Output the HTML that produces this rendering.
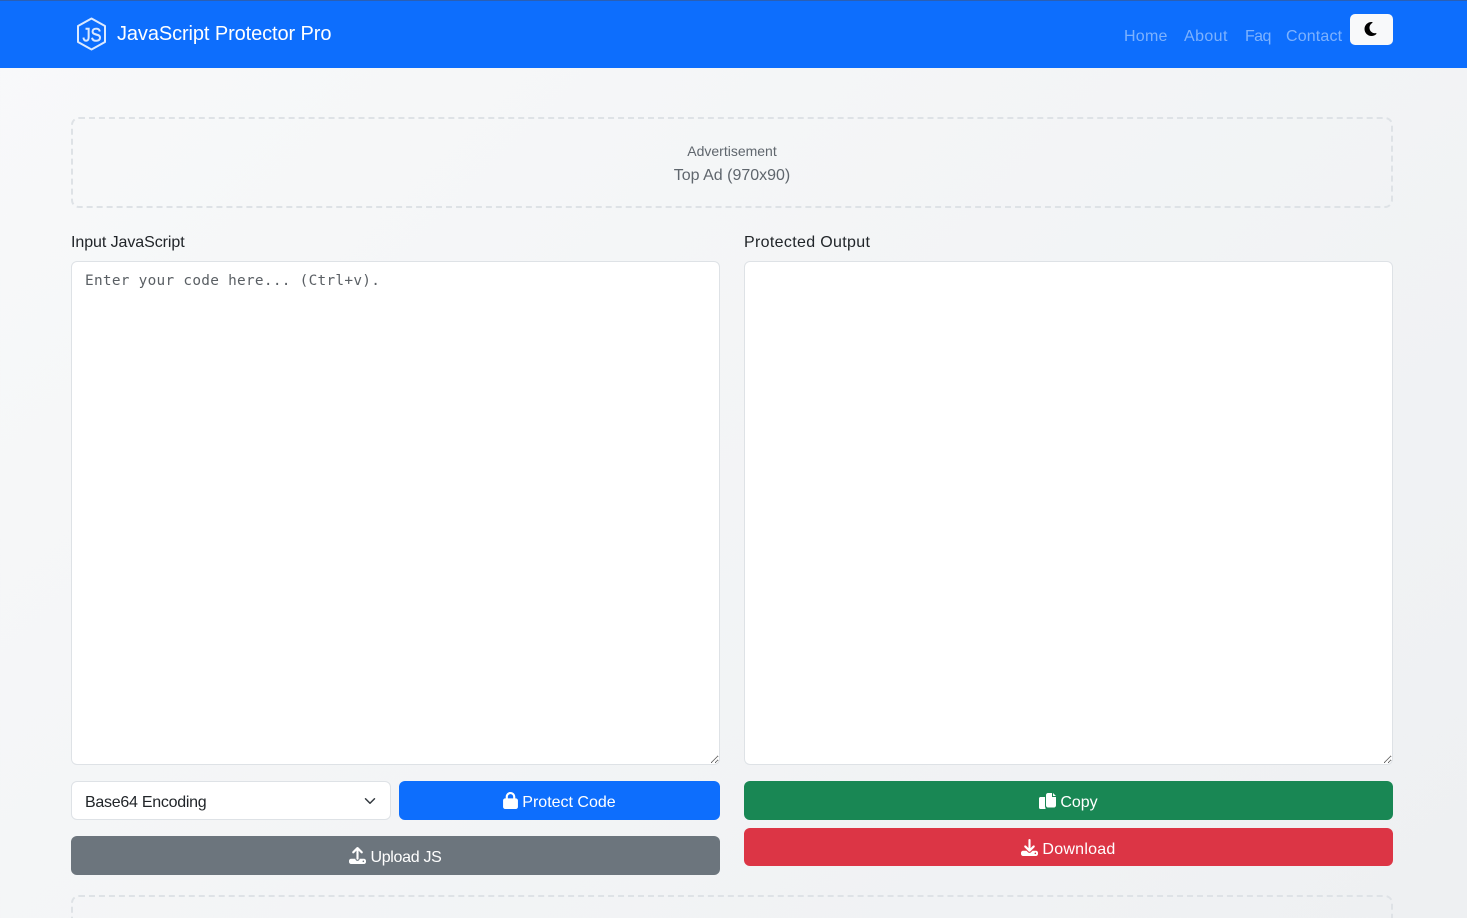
<!DOCTYPE html>
<html lang="en">
<head>
<meta charset="utf-8">
<title>JavaScript Protector Pro</title>
<style>
*{box-sizing:border-box}
html,body{margin:0;padding:0;width:1467px;height:918px;overflow:hidden}
body{position:relative;font-family:"Liberation Sans",sans-serif;font-size:16px;color:#212529;background:linear-gradient(135deg,#f8f9fa 0%,#eef0f2 100%)}
.abs{position:absolute;white-space:nowrap}
nav{position:absolute;left:0;top:0;width:1467px;height:68px;background:#0d6efd;border-top:1px solid #2a5fb4}
.brand{left:117px;top:22px;line-height:24px;font-size:20px;color:#fff;letter-spacing:-.1px}
.link{top:26px;line-height:22px;font-size:16px;color:#7db2fe}
.toggle{left:1350px;top:14px;width:43px;height:31px;background:#f8f9fa;border-radius:5px;border:0;padding:0}
.ad{left:71px;width:1322px;border:2px dashed #dee2e6;border-radius:8px}
.center{text-align:center}
label{position:absolute;font-size:16px;line-height:20px;top:233px;color:#212529}
textarea{position:absolute;top:261px;width:649px;height:504px;border:1px solid #dee2e6;border-radius:6px;background:#fff;padding:9px 13px;margin:0;font-family:"DejaVu Sans Mono","Liberation Mono",monospace;font-size:14.4px;letter-spacing:.28px;line-height:20px;color:#212529;outline:none;resize:vertical}
textarea::placeholder{color:#5a5f64;opacity:1}
.select{position:absolute;left:71px;top:781px;width:320px;height:39px;background:#fff;border:1px solid #dee2e6;border-radius:6px;padding-left:13px;line-height:41px;font-size:16px;letter-spacing:-.27px;color:#212529}
.btn{position:absolute;display:flex;align-items:center;justify-content:center;color:#fff;border:0;border-radius:6px;font-family:inherit;font-size:16px;padding:0}
.btn svg{fill:#fff;display:block;margin-right:4px}
.btn span{position:relative;top:2px}
</style>
</head>
<body>
<nav></nav>
<svg class="abs" style="left:74px;top:16px" width="36" height="36" viewBox="0 0 36 36">
<path d="M17.5 2.500 L31 10 V26 L17.500 33.500 L4 26 V10 Z" fill="none" stroke="#dbe9ff" stroke-width="2" stroke-linejoin="round"/>
<text x="8.500" y="25.500" font-family="Liberation Sans, sans-serif" font-size="19" fill="#dbe9ff" stroke="#dbe9ff" stroke-width=".5" textLength="19" lengthAdjust="spacingAndGlyphs">JS</text>
</svg>
<div class="abs brand">JavaScript Protector Pro</div>
<div class="abs link" style="left:1124px;letter-spacing:.25px">Home</div>
<div class="abs link" style="left:1184px;letter-spacing:.4px">About</div>
<div class="abs link" style="left:1245px;letter-spacing:-.6px">Faq</div>
<div class="abs link" style="left:1286px;letter-spacing:.15px">Contact</div>
<button class="abs toggle" aria-label="Toggle theme">
<svg style="position:absolute;left:14px;top:7px" width="13" height="16" viewBox="0 0 384 512"><path fill="#000" d="M223.5 32C100 32 0 132.3 0 256S100 480 223.5 480c60.6 0 115.5-24.2 155.8-63.4c5-4.9 6.3-12.5 3.1-18.7s-10.1-9.7-17-8.5c-9.8 1.7-19.8 2.6-30.1 2.6c-96.9 0-175.5-78.8-175.5-176c0-65.8 36-123.1 89.3-153.3c6.1-3.5 9.2-10.5 7.7-17.3s-7.3-11.9-14.3-12.5c-6.3-.5-12.6-.8-19-.8z"/></svg>
</button>

<div class="abs ad" style="top:117px;height:91px"></div>
<div class="abs center" style="left:71px;width:1322px;top:142px;line-height:18px;font-size:14px;color:#5f666d">Advertisement</div>
<div class="abs center" style="left:71px;width:1322px;top:166px;line-height:20px;font-size:16px;color:#5f666d">Top Ad (970x90)</div>

<label style="left:71px;letter-spacing:-.07px">Input JavaScript</label>
<label style="left:744px;letter-spacing:.33px">Protected Output</label>
<textarea style="left:71px" placeholder="Enter your code here... (Ctrl+v)."></textarea>
<textarea style="left:744px"></textarea>

<div class="select">Base64 Encoding
<svg style="position:absolute;left:292px;top:13px" width="12" height="12" viewBox="0 0 16 16"><path d="M2 5l6 6 6-6" fill="none" stroke="#343a40" stroke-width="2" stroke-linecap="round" stroke-linejoin="round"/></svg>
</div>
<button class="btn" style="left:399px;top:781px;width:321px;height:39px;background:#0d6efd">
<svg width="15" height="17" viewBox="0 0 448 512"><path d="M144 144v48H304V144c0-44.2-35.8-80-80-80s-80 35.8-80 80zM80 192V144C80 64.5 144.5 0 224 0s144 64.5 144 144v48h16c35.3 0 64 28.7 64 64V448c0 35.3-28.7 64-64 64H64c-35.3 0-64-28.7-64-64V256c0-35.3 28.7-64 64-64H80z"/></svg><span>Protect Code</span></button>
<button class="btn" style="left:71px;top:836px;width:649px;height:39px;background:#6c757d">
<svg width="17" height="17" viewBox="0 0 512 512"><path d="M288 109.3V352c0 17.7-14.3 32-32 32s-32-14.3-32-32V109.3l-73.4 73.4c-12.5 12.5-32.8 12.5-45.3 0s-12.5-32.8 0-45.3l128-128c12.5-12.5 32.8-12.5 45.3 0l128 128c12.5 12.5 12.5 32.8 0 45.3s-32.8 12.5-45.3 0L288 109.3zM64 352H192c0 35.3 28.7 64 64 64s64-28.7 64-64H448c35.3 0 64 28.7 64 64v32c0 35.3-28.7 64-64 64H64c-35.3 0-64-28.7-64-64V416c0-35.3 28.7-64 64-64zM432 456a24 24 0 1 0 0-48 24 24 0 1 0 0 48z"/></svg><span style="letter-spacing:-.3px">Upload JS</span></button>
<button class="btn" style="left:744px;top:781px;width:649px;height:39px;background:#198754">
<svg width="17" height="16" viewBox="0 0 17 16"><path d="M0 5.5C0 4.7.6 4 1.4 4H6v9.5c0 .5.2 1 .5 1.3V16H1.4C.6 16 0 15.400 0 14.600Z"/><path d="M7 2C7 .9 7.900 0 9 0h4v4h4v8.500c0 1.100-.9 2-2 2H9c-1.100 0-2-.9-2-2ZM14 0l3 3h-3Z"/></svg><span>Copy</span></button>
<button class="btn" style="left:744px;top:828px;width:649px;height:38px;background:#dc3545">
<svg width="17" height="17" viewBox="0 0 512 512"><path d="M288 32c0-17.700-14.300-32-32-32s-32 14.300-32 32V274.700l-73.400-73.400c-12.500-12.500-32.800-12.500-45.300 0s-12.500 32.800 0 45.300l128 128c12.500 12.500 32.800 12.500 45.300 0l128-128c12.500-12.500 12.500-32.800 0-45.300s-32.800-12.500-45.300 0L288 274.700V32zM64 352c-35.300 0-64 28.700-64 64v32c0 35.300 28.700 64 64 64H448c35.300 0 64-28.700 64-64V416c0-35.300-28.700-64-64-64H346.500l-45.300 45.300c-25 25-65.500 25-90.500 0L165.500 352H64zm368 56a24 24 0 1 1 0 48 24 24 0 1 1 0-48z"/></svg><span style="letter-spacing:.25px;top:3px">Download</span></button>

<div class="abs ad" style="top:895px;height:91px"></div>
</body>
</html>
